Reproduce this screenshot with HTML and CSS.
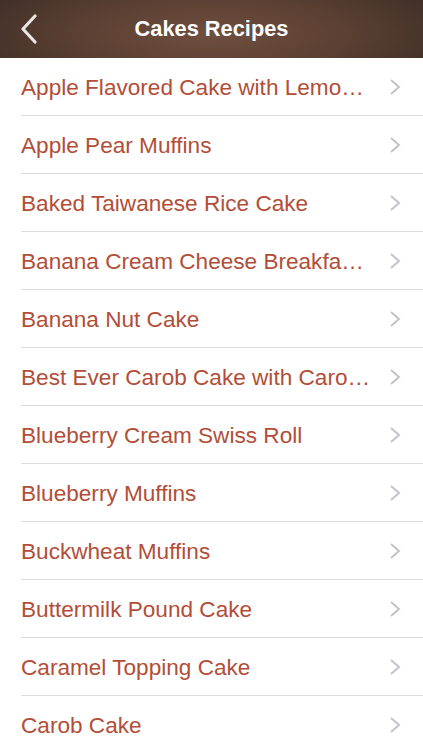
FILE: index.html
```html
<!DOCTYPE html>
<html>
<head>
<meta charset="utf-8">
<link rel="stylesheet" href="styles.css">
</head>
<body>
<div class="header">
  <svg class="back" width="18" height="30" viewBox="0 0 18 30"><path d="M15 2 L3 15 L15 28" fill="none" stroke="#ece6e2" stroke-width="3.2" stroke-linecap="round" stroke-linejoin="round"/></svg>
  <div class="title">Cakes Recipes</div>
</div>
<ul class="list">
  <li class="row"><span class="label">Apple Flavored Cake with Lemon Glaze</span><svg class="chev" width="12" height="18" viewBox="0 0 12 18"><path d="M2 2 L10 9 L2 16" fill="none" stroke="#c4c4c8" stroke-width="2"/></svg></li>
  <li class="row"><span class="label">Apple Pear Muffins</span><svg class="chev" width="12" height="18" viewBox="0 0 12 18"><path d="M2 2 L10 9 L2 16" fill="none" stroke="#c4c4c8" stroke-width="2"/></svg></li>
  <li class="row"><span class="label">Baked Taiwanese Rice Cake</span><svg class="chev" width="12" height="18" viewBox="0 0 12 18"><path d="M2 2 L10 9 L2 16" fill="none" stroke="#c4c4c8" stroke-width="2"/></svg></li>
  <li class="row"><span class="label">Banana Cream Cheese Breakfast Cake</span><svg class="chev" width="12" height="18" viewBox="0 0 12 18"><path d="M2 2 L10 9 L2 16" fill="none" stroke="#c4c4c8" stroke-width="2"/></svg></li>
  <li class="row"><span class="label">Banana Nut Cake</span><svg class="chev" width="12" height="18" viewBox="0 0 12 18"><path d="M2 2 L10 9 L2 16" fill="none" stroke="#c4c4c8" stroke-width="2"/></svg></li>
  <li class="row"><span class="label">Best Ever Carob Cake with Carob Frosting</span><svg class="chev" width="12" height="18" viewBox="0 0 12 18"><path d="M2 2 L10 9 L2 16" fill="none" stroke="#c4c4c8" stroke-width="2"/></svg></li>
  <li class="row"><span class="label">Blueberry Cream Swiss Roll</span><svg class="chev" width="12" height="18" viewBox="0 0 12 18"><path d="M2 2 L10 9 L2 16" fill="none" stroke="#c4c4c8" stroke-width="2"/></svg></li>
  <li class="row"><span class="label">Blueberry Muffins</span><svg class="chev" width="12" height="18" viewBox="0 0 12 18"><path d="M2 2 L10 9 L2 16" fill="none" stroke="#c4c4c8" stroke-width="2"/></svg></li>
  <li class="row"><span class="label">Buckwheat Muffins</span><svg class="chev" width="12" height="18" viewBox="0 0 12 18"><path d="M2 2 L10 9 L2 16" fill="none" stroke="#c4c4c8" stroke-width="2"/></svg></li>
  <li class="row"><span class="label">Buttermilk Pound Cake</span><svg class="chev" width="12" height="18" viewBox="0 0 12 18"><path d="M2 2 L10 9 L2 16" fill="none" stroke="#c4c4c8" stroke-width="2"/></svg></li>
  <li class="row"><span class="label">Caramel Topping Cake</span><svg class="chev" width="12" height="18" viewBox="0 0 12 18"><path d="M2 2 L10 9 L2 16" fill="none" stroke="#c4c4c8" stroke-width="2"/></svg></li>
  <li class="row"><span class="label">Carob Cake</span><svg class="chev" width="12" height="18" viewBox="0 0 12 18"><path d="M2 2 L10 9 L2 16" fill="none" stroke="#c4c4c8" stroke-width="2"/></svg></li>
</ul>
</body>
</html>
```
FILE: styles.css
```css
html, body {
  margin: 0;
  padding: 0;
  background: #ffffff;
  font-family: "Liberation Sans", Arial, sans-serif;
  overflow: hidden;
}
.header {
  height: 58px;
  display: flex;
  align-items: center;
  justify-content: center;
  position: relative;
  background: radial-gradient(ellipse 60% 120% at 50% 60%, #6f4f3f 0%, #5a3f32 55%, #3f2f28 100%);
}
.back {
  position: absolute;
  left: 20px;
  top: 14px;
}
.title {
  color: #ffffff;
  font-size: 21.8px;
  font-weight: bold;
}
.list {
  list-style: none;
  margin: 0;
  padding: 0 0 0 21px;
}
.row {
  height: 58px;
  box-sizing: border-box;
  border-bottom: 1px solid #dcdcdf;
  display: flex;
  align-items: center;
  padding-right: 22px;
}
.label {
  flex: 1;
  min-width: 0;
  color: #b24e38;
  font-size: 22.6px;
  white-space: nowrap;
  overflow: hidden;
  text-overflow: ellipsis;
  padding-right: 14px;
  padding-top: 2px;
}
.chev {
  flex: none;
}
```
